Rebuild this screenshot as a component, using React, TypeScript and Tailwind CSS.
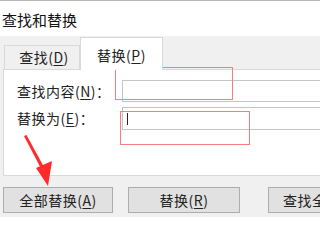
import React from "react";

const font = { fontFamily: '"Noto Sans CJK SC", "Liberation Sans", sans-serif' };

function Key({ k }: { k: string }) {
  return (
    <span>
      (<span className="underline underline-offset-2">{k}</span>)
    </span>
  );
}

function Btn({ label, k, className }: { label: string; k?: string; className: string }) {
  return (
    <div
      className={
        "h-[26px] shrink-0 flex items-center justify-center bg-[#e1e1e1] border border-[#adadad] text-[14px] tracking-[0.5px] text-[#222] whitespace-nowrap " +
        className
      }
    >
      {label}
      {k && <Key k={k} />}
    </div>
  );
}

export default function App() {
  return (
    <div className="relative w-[320px] h-[240px] overflow-hidden bg-white" style={font}>
      <div className="h-[36px] border-t border-[#b8b8b8] pl-[2px] pt-[8px] text-[15px] leading-[22px] text-[#111]">
        查找和替换
      </div>

      <div className="bg-[#f0f0f0] h-[181px] flex flex-col">
        {/* tabs */}
        <div className="h-[33px] flex items-end pl-[4px]">
          <div className="w-[76px] h-[24px] border border-b-0 border-[#d9d9d9] flex items-center justify-center pl-[4px] text-[14px] tracking-[0.5px] text-[#222]">
            查找<Key k="D" />
          </div>
          <div className="w-[83px] h-[33px] -mb-px z-10 bg-white border border-b-0 border-[#d9d9d9] flex items-center justify-center text-[14px] tracking-[0.5px] text-[#222] pt-[2px]">
            替换<Key k="P" />
          </div>
        </div>

        {/* panel */}
        <div className="ml-[3px] h-[107px] bg-white border border-r-0 border-[#d9d9d9] pt-[10px] flex flex-col text-[14px] tracking-[0.5px] text-[#222]">
          <div className="flex items-center h-[22px]">
            <div className="w-[118px] pl-[13px] whitespace-nowrap">
              查找内容<Key k="N" />：
            </div>
            <div className="flex-1 h-[22px] border border-r-0 border-[#c4c4c4]" />
          </div>
          <div className="flex items-center h-[23px] mt-[5px]">
            <div className="w-[118px] pl-[13px] whitespace-nowrap">
              替换为<Key k="E" />：
            </div>
            <div className="flex-1 h-[23px] border border-r-0 border-[#c4c4c4] flex items-center pl-[4px]">
              <div className="w-px h-[12px] bg-[#222]" />
            </div>
          </div>
        </div>

        {/* buttons */}
        <div className="flex mt-[11px] pl-[3px] overflow-hidden">
          <Btn label="全部替换" k="A" className="w-[110px]" />
          <Btn label="替换" k="R" className="w-[112px] ml-[15px]" />
          <Btn label="查找全部" className="w-[100px] ml-[28px] justify-start pl-[14px]" />
        </div>
      </div>

      {/* annotations */}
      <div className="absolute left-[115px] top-[67px] w-[118px] h-[33px] border-[1.5px] border-[#f77d7d]" />
      <div className="absolute left-[120px] top-[111px] w-[130px] h-[34px] border-[1.5px] border-[#f77d7d]" />
      <svg className="absolute left-0 top-0" width="320" height="240" viewBox="0 0 320 240">
        <polygon points="24,136 26.5,135 44.5,168 41.5,169.5" fill="#ff2a2a" />
        <polygon points="36,168 52,161 48,186" fill="#ff2a2a" />
      </svg>
    </div>
  );
}
